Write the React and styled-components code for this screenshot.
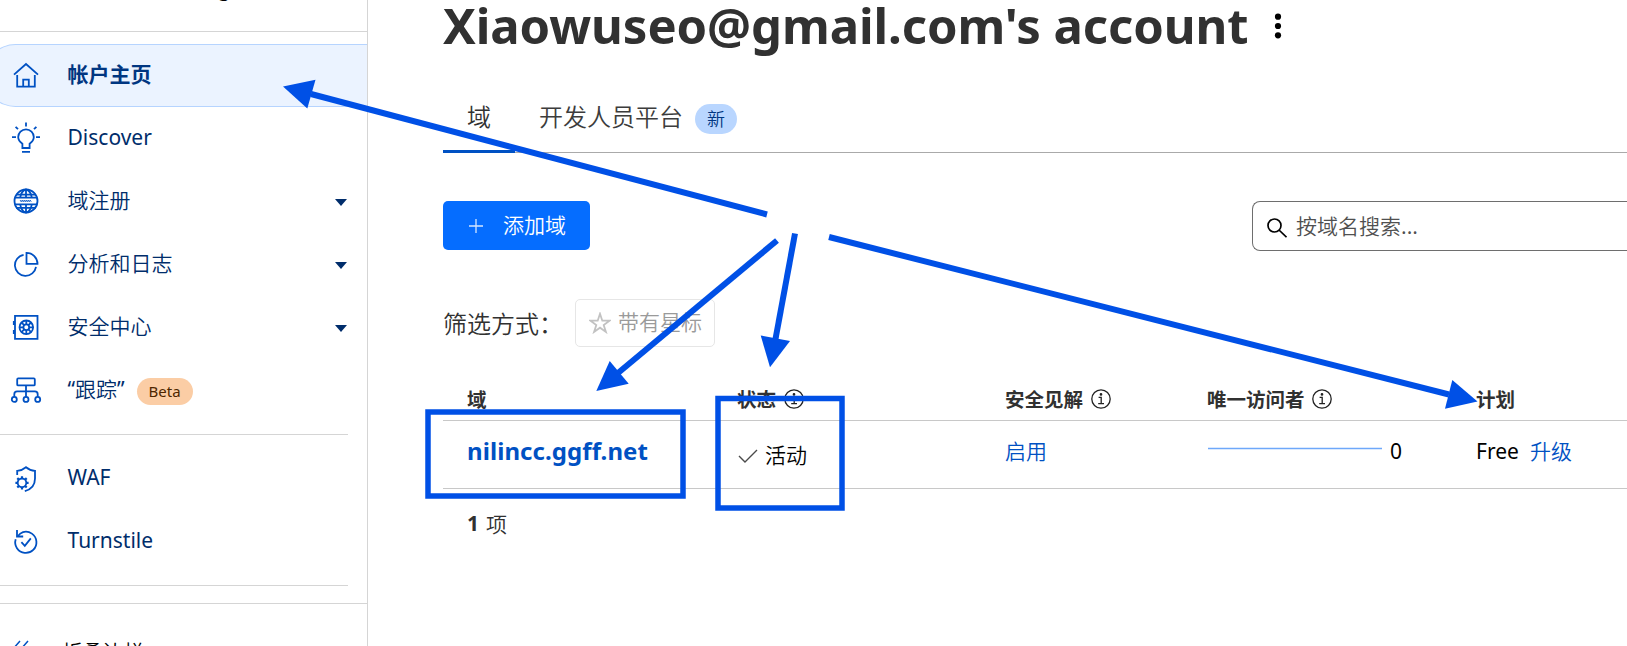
import React from "react";
import styled, { createGlobalStyle } from "styled-components";

const GlobalStyle = createGlobalStyle`
  * { box-sizing: border-box; }
  body {
    margin: 0;
    background: #fff;
    color: #313131;
    font-family: "Noto Sans", "Noto Sans CJK SC", sans-serif;
    font-size: 21px;
    overflow: hidden;
  }
`;

const Page = styled.div`
  position: relative;
  display: flex;
  width: 1627px;
  height: 646px;
  overflow: hidden;
`;

/* Chinese copy is set in the demi-light cut of the CJK family */
const Han = styled.span`
  font-family: "Noto Sans CJK SC DemiLight", "Noto Sans CJK SC", sans-serif;
  font-weight: 350;
`;

/* ---------- sidebar ---------- */

const Sidebar = styled.aside`
  display: flex;
  flex-direction: column;
  flex: none;
  width: 368px;
  height: 646px;
  overflow: hidden;
  border-right: 1px solid #d5d5d5;
`;

const AccountBar = styled.div`
  flex: none;
  display: flex;
  align-items: flex-start;
  height: 32px;
  padding-left: 93px;
  border-bottom: 1px solid #d5d5d5;
  color: #000;
  line-height: 30px;
  overflow: hidden;
`;

const AccountName = styled.span`
  margin-top: -27px;
  white-space: nowrap;
`;

const NavList = styled.nav`
  flex: none;
  display: flex;
  flex-direction: column;
  padding-top: ${(p) => p.$top}px;
`;

const NavItem = styled.a`
  display: flex;
  align-items: center;
  height: 63px;
  margin-left: -16px;
  padding: 0 20px 2px 25px;
  border: 1px solid ${(p) => (p.$active ? "#b6d4ff" : "transparent")};
  border-right: 0;
  border-radius: 31.5px 0 0 31.5px;
  background: ${(p) => (p.$active ? "#ebf3ff" : "transparent")};
  color: ${(p) => (p.$active ? "#003681" : "#002d6b")};
`;

const NavIcon = styled.svg`
  flex: none;
  width: 32px;
  height: 32px;
  margin: 2px 25.5px 0 0;
  fill: none;
  stroke: #0051c3;
  stroke-width: 1.8;
`;

const NavLabel = styled.span`
  margin-top: ${(p) => (p.$latin ? -1 : -4)}px;
  white-space: nowrap;
  font-weight: ${(p) => (p.$bold ? 700 : 400)};
`;

const Caret = styled.span`
  margin: 3px 0 0 auto;
  border: 6.500px solid transparent;
  border-top: 7px solid #002d6b;
  border-bottom: 0;
`;

const BetaBadge = styled.span`
  margin: 3px 0 0 12px;
  padding: 0 12px;
  border-radius: 14px;
  background: #fbcda5;
  color: #4d2600;
  font-size: 15px;
  line-height: 27px;
`;

const NavDivider = styled.hr`
  flex: none;
  width: 348px;
  height: 1px;
  margin: ${(p) => p.$top}px 0 0;
  border: 0;
  background: #d5d5d5;
`;

const CollapseBar = styled.div`
  flex: none;
  display: flex;
  align-items: flex-start;
  margin-top: 17px;
  height: 80px;
  padding: 34px 0 0 12px;
  border-top: 1px solid #d5d5d5;
  color: #000;
  font-size: 20.5px;
  line-height: 26px;
`;

const CollapseIcon = styled.svg`
  width: 18px;
  height: 18px;
  margin: 2px 32px 0 0;
  fill: none;
  stroke: #0051c3;
  stroke-width: 1.5;
`;

const icons = {
  home: (
    <>
      <path d="M4 14.6 16 4l12 10.6" />
      <path d="M7.2 15v11.6h17.6V15M13.2 26.6v-7h5.6v7" />
    </>
  ),
  bulb: (
    <>
      <path d="M12.4 25v-4.2c-2.6-1.8-4.2-4-4.2-6.7a7.8 7.8 0 0 1 15.6 0c0 2.700-1.600 4.900-4.200 6.700V25zM12 28.800h8" />
      <path d="M16 3.600V-.4M8 6.200 5.600 3.800M24 6.200l2.400-2.400M2 14.200h4M26 14.200h4" />
    </>
  ),
  globe: (
    <>
      <circle cx="16" cy="15" r="11.500" />
      <path d="M16 3.500v7.500M16 19v7.500M6 8.600h20M6 21.800h20M4.500 11.600h23M4.500 18.400h23" />
      <path d="M10.200 11.600c.7-4 3-7.600 5.800-8.100 2.800.5 5.100 4.100 5.800 8.100M10.200 18.400c.7 4.300 3 7.600 5.800 8.100 2.800-.5 5.100-3.800 5.800-8.100" />
      <path d="M10.200 14.200l1 1.500 1-1.500 1 1.500 1-1.500 1 1.500 1-1.500 1 1.500 1-1.500 1 1.500 1-1.500 1 1.500" strokeWidth="1" />
    </>
  ),
  pie: (
    <>
      <path d="M13.600 5.800A10.600 10.600 0 1 0 26 17.800" />
      <path d="M16.500 3.800v11h11a11 11 0 0 0-11-11z" />
    </>
  ),
  vault: (
    <>
      <path d="M5 3.800h22.500v23H5zM3.800 9v4M3.800 18v4" />
      <circle cx="16.300" cy="15.300" r="6.800" />
      <circle cx="16.300" cy="15.300" r="2.900" />
      <path d="M16.300 8.300v4M16.300 18.300v4M9.300 15.300h4M19.300 15.300h4M11.300 10.300l2.900 2.900M18.400 17.400l2.900 2.900M21.300 10.300l-2.900 2.900M14.200 17.400l-2.900 2.900" />
    </>
  ),
  trace: (
    <>
      <rect x="7.200" y="3.400" width="17.600" height="7" rx="1" />
      <path d="M16 10.400v11.400M4.300 21.800v-2.600q0-2.800 2.800-2.800h17.800q2.800 0 2.800 2.800v2.600" />
      <circle cx="4.300" cy="24.400" r="2.500" />
      <circle cx="16" cy="24.400" r="2.500" />
      <circle cx="27.700" cy="24.400" r="2.500" />
    </>
  ),
  shield: (
    <>
      <path d="M7.200 12V7.800C10.600 7.600 13.600 6.200 16 4.200c2.400 2 5.400 3.400 9 3.600v7.800c0 6.600-4 11-10.200 12.600" />
      <circle cx="12" cy="19.800" r="4.300" />
      <path d="M12 13.200V15.500M12 24.100v2.300M5.400 19.800h2.300M16.300 19.800h2.300M7.300 15.100l1.700 1.700M15 22.800l1.700 1.700M16.700 15.100 15 16.800M9 22.800l-1.700 1.700" strokeWidth="2.200" />
    </>
  ),
  turnstile: (
    <>
      <path d="M5.700 13.200A10.600 10.600 0 1 0 13 6.100q-3 1-5 4" />
      <path d="M7 4v6.500h6.200M11.400 16.200l3.400 3.600 6-7.400" />
    </>
  ),
};

const primaryNav = [
  { icon: "home", label: "帐户主页", active: true },
  { icon: "bulb", label: "Discover" },
  { icon: "globe", label: "域注册", han: true, caret: true },
  { icon: "pie", label: "分析和日志", han: true, caret: true },
  { icon: "vault", label: "安全中心", han: true, caret: true },
  { icon: "trace", label: "跟踪", quoted: true, beta: true },
];

const secondaryNav = [
  { icon: "shield", label: "WAF" },
  { icon: "turnstile", label: "Turnstile" },
];

const labelOf = (item) => {
  if (item.quoted) return <>“<Han>{item.label}</Han>”</>;
  return item.han ? <Han>{item.label}</Han> : item.label;
};

const renderNav = (items) =>
  items.map((item) => (
    <NavItem key={item.icon} $active={item.active}>
      <NavIcon viewBox="0 0 32 32" overflow="visible">{icons[item.icon]}</NavIcon>
      <NavLabel $bold={item.active} $latin={/^[A-Z]/.test(item.label)}>
        {labelOf(item)}
      </NavLabel>
      {item.beta && <BetaBadge>Beta</BetaBadge>}
      {item.caret && <Caret />}
    </NavItem>
  ));

/* ---------- main column ---------- */

const Main = styled.main`
  flex: 1;
  display: flex;
  flex-direction: column;
  min-width: 0;
  padding-left: 75px;
`;

const TitleRow = styled.header`
  flex: none;
  display: flex;
  align-items: center;
  height: 104px;
  padding-bottom: 53px;
`;

const Title = styled.h1`
  margin: -2px 0 0;
  color: #313131;
  font-size: 49px;
  line-height: 68px;
  font-weight: 700;
  letter-spacing: -0.07px;
  white-space: nowrap;
`;

const KebabIcon = styled.svg`
  width: 8px;
  height: 26px;
  margin-left: 26px;
  fill: #000;
`;

const Tabs = styled.div`
  flex: none;
  display: flex;
  height: 49px;
  border-bottom: 1px solid #aaa;
  font-size: 24px;
`;

const Tab = styled.div`
  display: flex;
  align-items: flex-start;
  height: 49px;
  padding: 0 24px;
  white-space: nowrap;
  border-bottom: 3px solid ${(p) => (p.$active ? "#0051c3" : "transparent")};
  color: ${(p) => (p.$active ? "#313131" : "#3c3c3c")};
`;

const TabLabel = styled(Han)`
  margin-top: -2px;
  line-height: 27px;
`;

const NewBadge = styled(Han)`
  margin-left: 12px;
  width: 42px;
  height: 30px;
  border-radius: 15px;
  background: #b9d6ff;
  color: #003681;
  font-size: 18px;
  line-height: 28px;
  text-align: center;
`;

const Toolbar = styled.div`
  flex: none;
  display: flex;
  justify-content: space-between;
  margin-top: 48px;
  height: 50px;
`;

const AddButton = styled.button`
  display: flex;
  align-items: center;
  width: 147px;
  height: 49px;
  padding: 0 0 0 26px;
  border: 0;
  border-radius: 5px;
  background: #056dff;
  color: #fff;
  font: inherit;
  white-space: nowrap;
`;

const ButtonText = styled(Han)`
  margin-top: -3px;
`;

const PlusIcon = styled.svg`
  width: 14px;
  height: 14px;
  margin: 0 20px 0 0;
  stroke: #d5e6ff;
  stroke-width: 1.3;
`;

const SearchBox = styled.div`
  display: flex;
  align-items: center;
  width: 375px;
  height: 50px;
  padding-left: 14px;
  border: 1px solid #6e6e6e;
  border-right: 0;
  border-radius: 8px 0 0 8px;
  color: #505050;
`;

const SearchIcon = styled.svg`
  width: 20px;
  height: 20px;
  margin: 3px 9px 0 0;
  fill: none;
  stroke: #000;
  stroke-width: 1.7;
`;

const FilterRow = styled.div`
  flex: none;
  display: flex;
  align-items: center;
  height: 48px;
  margin-top: 48px;
  font-size: 24px;
`;

const FilterLabel = styled(Han)`
  width: 132px;
  margin-top: -2px;
  white-space: nowrap;
`;

const StarFilter = styled.button`
  display: flex;
  align-items: center;
  width: 140px;
  height: 48px;
  padding: 0 0 1px 13px;
  border: 1px solid #e6e6e6;
  border-radius: 5px;
  background: #fff;
  color: #9a9a9a;
  font: inherit;
  font-size: 21px;
  white-space: nowrap;
`;

const StarIcon = styled.svg`
  width: 22px;
  height: 22px;
  margin-right: 7px;
  fill: none;
  stroke: #c2c2c2;
  stroke-width: 1.8;
`;

const GridRow = styled.div`
  flex: none;
  display: grid;
  grid-template-columns: 270px 268px 202px 269px 1fr;
  padding-left: 24px;
  border-bottom: 1px solid #c8c8c8;
`;

const HeadRow = styled(GridRow)`
  height: 74px;
  padding-top: 39px;
  font-size: 19.5px;
  line-height: 28px;
  font-weight: 700;
`;

const BodyRow = styled(GridRow)`
  height: 68px;
  padding-top: 15px;
  color: #000;
  line-height: 30px;
`;

const HeadCell = styled.div`
  display: flex;
  white-space: nowrap;
`;

const InfoIcon = styled.svg`
  width: 20px;
  height: 20px;
  margin: 3px 0 0 7.5px;
  fill: none;
  stroke: #222;
  stroke-width: 1.3;
`;

const Cell = styled.div`
  display: flex;
  padding-top: ${(p) => p.$drop || 0}px;
  white-space: nowrap;
`;

const DomainLink = styled.a`
  color: #0051c3;
  font-size: 24px;
  line-height: 29px;
  font-weight: 700;
  letter-spacing: 0.08px;
`;

const TextLink = styled.a`
  color: #0051c3;
  margin-top: -1px;
`;

const PlanName = styled.span`
  width: 54px;
`;

const CheckIcon = styled.svg`
  width: 20px;
  height: 16px;
  margin: 9px 7px 0 1px;
  fill: none;
  stroke: #4a4a4a;
  stroke-width: 1.4;
`;

const Sparkline = styled.svg`
  width: 174px;
  height: 3px;
  margin: 11px 8px 0 1px;
`;

const Summary = styled.div`
  display: flex;
  gap: 7px;
  padding: 19px 0 0 24px;
  line-height: 30px;
`;

const Info = () => (
  <InfoIcon viewBox="0 0 20 20">
    <circle cx="10" cy="10" r="9.200" />
    <path d="M7.600 8.300h2.600v6.200M7.200 14.600h5.800" />
    <circle cx="10" cy="5.400" r=".7" fill="#222" />
  </InfoIcon>
);

/* ---------- annotation marks laid over the page ---------- */

const Markup = styled.svg`
  position: absolute;
  inset: 0;
  width: 1627px;
  height: 646px;
  pointer-events: none;
  fill: #0050e6;
  stroke: #0050e6;
`;

const arrows = [
  { from: [767, 214.5], neck: [311, 94], head: "283,86.500 315.500,79.800 307.300,108.500" },
  { from: [777, 240.5], neck: [618, 373], head: "596.300,391 609.700,361 628.700,383.700" },
  { from: [795, 233.5], neck: [775.5, 339], head: "770,367.300 760.700,335.500 790,341" },
  { from: [829, 237], neck: [1449, 394.5], head: "1477.500,401.500 1452.300,380 1445,408.700" },
];

export default function App() {
  return (
    <Page>
      <GlobalStyle />
      <Sidebar>
        <AccountBar>
          <AccountName>Xiaowuseo@gmail.co...</AccountName>
        </AccountBar>
        <NavList $top={12}>{renderNav(primaryNav)}</NavList>
        <NavDivider $top={12} />
        <NavList $top={12}>{renderNav(secondaryNav)}</NavList>
        <NavDivider $top={12} />
        <CollapseBar>
          <CollapseIcon viewBox="0 0 18 18">
            <path d="M8 1 1 9l7 8M16 1 9 9l7 8" />
          </CollapseIcon>
          <Han>折叠边栏</Han>
        </CollapseBar>
      </Sidebar>

      <Main>
        <TitleRow>
          <Title>Xiaowuseo@gmail.com's account</Title>
          <KebabIcon viewBox="0 0 8 26">
            <circle cx="4" cy="3.700" r="3.100" />
            <circle cx="4" cy="13" r="3.100" />
            <circle cx="4" cy="22.300" r="3.100" />
          </KebabIcon>
        </TitleRow>

        <Tabs>
          <Tab $active><TabLabel>域</TabLabel></Tab>
          <Tab>
            <TabLabel>开发人员平台</TabLabel>
            <NewBadge>新</NewBadge>
          </Tab>
        </Tabs>

        <Toolbar>
          <AddButton>
            <PlusIcon viewBox="0 0 14 14">
              <path d="M7 0v14M0 7h14" />
            </PlusIcon>
            <ButtonText>添加域</ButtonText>
          </AddButton>
          <SearchBox>
            <SearchIcon viewBox="0 0 20 20">
              <circle cx="7.500" cy="7.500" r="6.500" />
              <path d="m12 12 7.500 7.200" />
            </SearchIcon>
            <ButtonText>按域名搜索...</ButtonText>
          </SearchBox>
        </Toolbar>

        <FilterRow>
          <FilterLabel>筛选方式：</FilterLabel>
          <StarFilter>
            <StarIcon viewBox="0 0 22 22">
              <path d="m11 1.800 2.300 6.900h7.200l-5.800 4.300 2.200 6.900-5.900-4.200-5.900 4.200L7.300 13 1.500 8.700h7.200z" />
            </StarIcon>
            <ButtonText>带有星标</ButtonText>
          </StarFilter>
        </FilterRow>

        <HeadRow>
          <HeadCell>域</HeadCell>
          <HeadCell>状态<Info /></HeadCell>
          <HeadCell>安全见解<Info /></HeadCell>
          <HeadCell>唯一访问者<Info /></HeadCell>
          <HeadCell>计划</HeadCell>
        </HeadRow>
        <BodyRow>
          <Cell><DomainLink>nilincc.ggff.net</DomainLink></Cell>
          <Cell $drop={3}>
            <CheckIcon viewBox="0 0 20 16">
              <path d="m1 8 6 6L19 2" />
            </CheckIcon>
            <Han>活动</Han>
          </Cell>
          <Cell><TextLink><Han>启用</Han></TextLink></Cell>
          <Cell>
            <Sparkline viewBox="0 0 174 3">
              <path d="M0 1.500h174" stroke="#6ea8fa" strokeWidth="1.500" />
            </Sparkline>
            0
          </Cell>
          <Cell>
            <PlanName>Free</PlanName>
            <TextLink><Han>升级</Han></TextLink>
          </Cell>
        </BodyRow>
        <Summary><b>1</b><Han>项</Han></Summary>
      </Main>

      <Markup viewBox="0 0 1627 646">
        {arrows.map(({ from, neck, head }) => (
          <g key={head}>
            <line x1={from[0]} y1={from[1]} x2={neck[0]} y2={neck[1]} strokeWidth="6" />
            <polygon points={head} stroke="none" />
          </g>
        ))}
        <rect x="428" y="412" width="255" height="84" fill="none" strokeWidth="5.500" />
        <rect x="718" y="398.500" width="124" height="109.500" fill="none" strokeWidth="5.500" />
      </Markup>
    </Page>
  );
}
